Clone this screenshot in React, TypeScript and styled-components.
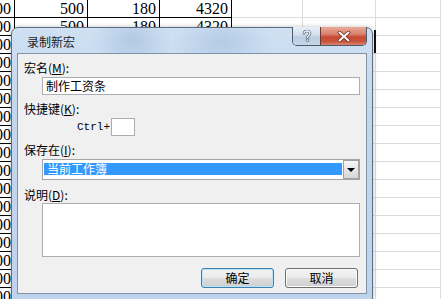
import React from "react";
import styled, { createGlobalStyle } from "styled-components";

const GlobalStyle = createGlobalStyle`
  html, body { margin: 0; padding: 0; background: #ffffff; }
  body { width: 441px; height: 299px; overflow: hidden; }
  #root { position: relative; width: 441px; height: 299px; overflow: hidden; }
`;

const CJK = `"Noto Sans CJK SC", "Noto Sans", sans-serif`;

/* ---------- spreadsheet behind ---------- */
const Sheet = styled.div`
  display: grid;
  grid-template-columns: 15px 73px 72px 72px 71px 73px 1fr;
  grid-auto-rows: 18px;
  width: 441px;
  background: #ffffff;
`;

const Cell = styled.div<{ $dark: boolean }>`
  box-sizing: border-box;
  border-right: 1px solid ${(p) => (p.$dark ? "#000000" : "#dadcdd")};
  border-bottom: 1px solid ${(p) => (p.$dark ? "#000000" : "#dadcdd")};
  overflow: hidden;
  white-space: nowrap;
  display: flex;
  justify-content: flex-end;
  padding: 0 3px 0 0;
  font-family: "Liberation Serif", serif;
  font-size: 16px;
  line-height: 18px;
  color: #000000;
`;

const SelectionEdge = styled.div`
  position: absolute;
  left: 374px;
  top: 30px;
  width: 2px;
  height: 23px;
  background: #111111;
`;

/* ---------- dialog window ---------- */
const Window = styled.div`
  position: absolute;
  left: 11px;
  top: 27px;
  width: 362px;
  height: 273px;
  box-sizing: border-box;
  border: 1px solid #5d6b80;
  border-radius: 7px 7px 0 0;
  padding: 0 5px 5px 5px;
  display: flex;
  flex-direction: column;
  background:
    radial-gradient(ellipse 40px 30px at 120px 12px, rgba(150, 180, 215, 0.5), transparent),
    radial-gradient(ellipse 50px 30px at 210px 14px, rgba(150, 180, 215, 0.45), transparent),
    linear-gradient(180deg, #cfe0f2 0%, #c2d7ee 30%, #bfd4ec 100%);
  box-shadow: 0 0 4px rgba(0, 0, 0, 0.25);
`;

const TitleBar = styled.div`
  height: 25px;
  display: flex;
  justify-content: space-between;
  align-items: flex-start;
`;

const Title = styled.div`
  padding: 6px 0 0 10px;
  font-family: ${CJK};
  font-size: 12px;
  line-height: 16px;
  color: #1b1b1b;
`;

const CaptionGroup = styled.div`
  display: flex;
  margin-top: -1px;
  border: 1px solid #4e5a6c;
  border-top: none;
  border-radius: 0 0 5px 5px;
  overflow: hidden;
`;

const CaptionButton = styled.div<{ $close?: boolean }>`
  width: ${(p) => (p.$close ? "46px" : "27px")};
  height: 18px;
  display: flex;
  align-items: center;
  justify-content: center;
  box-sizing: border-box;
  border-left: ${(p) => (p.$close ? "1px solid #6a3a34" : "none")};
  background: ${(p) =>
    p.$close
      ? "linear-gradient(180deg, #e9a99a 0%, #d9806c 40%, #c74a34 55%, #c9533c 80%, #d9856f 100%)"
      : "linear-gradient(180deg, #e6eef7 0%, #d2deec 45%, #bccde1 55%, #c7d6e7 100%)"};
`;

const Client = styled.div`
  flex: 1;
  box-sizing: border-box;
  border: 1px solid #7f93ab;
  background: #f0f0f0;
  padding: 6px 6px 0 6px;
  display: flex;
  flex-direction: column;
  font-family: ${CJK};
  font-size: 12px;
  color: #000000;
`;

const Label = styled.div<{ $gap: number }>`
  margin-top: ${(p) => p.$gap}px;
  height: 16px;
  line-height: 16px;
  white-space: nowrap;
`;

const Key = styled.span`
  text-decoration: underline;
`;

const Field = styled.div<{ $height: number; $gap?: number }>`
  margin: ${(p) => p.$gap ?? 1}px 0 0 18px;
  height: ${(p) => p.$height}px;
  box-sizing: border-box;
  border: 1px solid #abadb3;
  background: #ffffff;
  padding: 0 3px;
  line-height: ${(p) => Math.min(p.$height - 2, 16)}px;
  white-space: nowrap;
`;

const ShortcutRow = styled.div`
  margin: 1px 0 0 53px;
  display: flex;
  align-items: center;
  gap: 1px;
  height: 18px;
`;

const Ctrl = styled.span`
  font-family: "Liberation Mono", monospace;
  font-size: 11px;
  line-height: 18px;
`;

const KeyBox = styled.div`
  width: 24px;
  height: 18px;
  box-sizing: border-box;
  border: 1px solid #abadb3;
  background: #ffffff;
`;

const Select = styled.div`
  margin: 1px 0 0 18px;
  height: 21px;
  box-sizing: border-box;
  border: 1px solid #a5a5a5;
  background: #ffffff;
  display: flex;
`;

const Highlight = styled.div`
  flex: 1;
  margin: 3px 1px 4px 1px;
  background: #3399ff;
  color: #ffffff;
  padding-left: 3px;
  line-height: 12px;
  font-size: 12px;
  white-space: nowrap;
  overflow: hidden;
`;

const DropButton = styled.div`
  width: 16px;
  box-sizing: border-box;
  border: 1px solid #a0a0a0;
  background: linear-gradient(180deg, #f6f6f6 0%, #e6e6e6 50%, #d6d6d6 100%);
  display: flex;
  align-items: center;
  justify-content: center;
`;

const Arrow = styled.div`
  width: 0;
  height: 0;
  border-left: 4px solid transparent;
  border-right: 4px solid transparent;
  border-top: 4px solid #000000;
  margin-top: 1px;
`;

const Buttons = styled.div`
  margin: 11px 2px 0 0;
  display: flex;
  justify-content: flex-end;
  gap: 11px;
`;

const Button = styled.div<{ $default?: boolean }>`
  width: 73px;
  height: 20px;
  box-sizing: border-box;
  border: 1px solid ${(p) => (p.$default ? "#3c7fb1" : "#707070")};
  border-radius: 3px;
  background: linear-gradient(180deg, #f2f2f2 0%, #ebebeb 50%, #dddddd 51%, #cfcfcf 100%);
  box-shadow: inset 0 0 0 1px ${(p) => (p.$default ? "#b8e4fb" : "#fcfcfc")};
  display: flex;
  align-items: center;
  justify-content: center;
  font-size: 12px;
  line-height: 18px;
`;

const rows = Array.from({ length: 17 }, () => ["3000", "500", "180", "4320", "", "", ""]);

export default function App() {
  return (
    <>
      <GlobalStyle />
      <Sheet>
        {rows.map((r, i) =>
          r.map((v, j) => (
            <Cell key={`${i}-${j}`} $dark={j < 4}>
              {v}
            </Cell>
          ))
        )}
      </Sheet>
      <SelectionEdge />
      <Window>
        <TitleBar>
          <Title>录制新宏</Title>
          <CaptionGroup>
            <CaptionButton>
              <svg width="10" height="12" viewBox="0 0 10 12">
                <path
                  d="M2 3.5 C2 1.5 3.5 1 5 1 C6.8 1 8 2 8 3.5 C8 5.2 5.5 5.5 5.5 7.5"
                  fill="none"
                  stroke="#4a5668"
                  strokeWidth="2.6"
                  strokeLinecap="round"
                />
                <path
                  d="M2 3.5 C2 1.5 3.5 1 5 1 C6.8 1 8 2 8 3.5 C8 5.2 5.5 5.5 5.5 7.5"
                  fill="none"
                  stroke="#f4f6f9"
                  strokeWidth="1.3"
                  strokeLinecap="round"
                />
                <circle cx="5.5" cy="10.2" r="1.4" fill="#f4f6f9" stroke="#4a5668" strokeWidth="0.8" />
              </svg>
            </CaptionButton>
            <CaptionButton $close>
              <svg width="14" height="11" viewBox="0 0 14 11">
                <path d="M2.5 1.5 L11.5 9.5 M11.5 1.5 L2.5 9.5" stroke="#6b2a1f" strokeWidth="3.6" strokeLinecap="round" />
                <path d="M2.5 1.5 L11.5 9.5 M11.5 1.5 L2.5 9.5" stroke="#ffffff" strokeWidth="2" strokeLinecap="round" />
              </svg>
            </CaptionButton>
          </CaptionGroup>
        </TitleBar>
        <Client>
          <Label $gap={0}>
            宏名(<Key>M</Key>):
          </Label>
          <Field $height={18}>制作工资条</Field>
          <Label $gap={6}>
            快捷键(<Key>K</Key>):
          </Label>
          <ShortcutRow>
            <Ctrl>Ctrl+</Ctrl>
            <KeyBox />
          </ShortcutRow>
          <Label $gap={6}>
            保存在(<Key>I</Key>):
          </Label>
          <Select>
            <Highlight>当前工作簿</Highlight>
            <DropButton>
              <Arrow />
            </DropButton>
          </Select>
          <Label $gap={7}>
            说明(<Key>D</Key>):
          </Label>
          <Field $height={54} $gap={0} />
          <Buttons>
            <Button $default>确定</Button>
            <Button>取消</Button>
          </Buttons>
        </Client>
      </Window>
    </>
  );
}
